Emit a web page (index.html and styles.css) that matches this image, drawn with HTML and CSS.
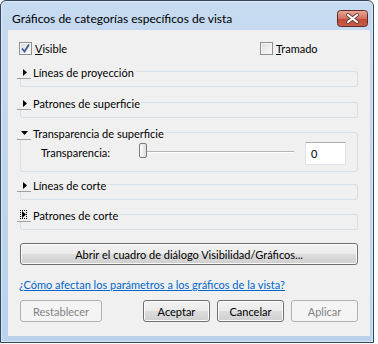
FILE: index.html
```html
<!DOCTYPE html>
<html lang="es">
  <head>
    <meta charset="UTF-8" />
    <title>Gráficos de categorías específicos de vista</title>
    <link rel="stylesheet" href="styles.css">
  </head>
  <body>
    <div class="window">
      <div class="titlebar">
        <span class="title">Gráficos de categorías específicos de vista</span>
        <svg class="close" width="31" height="17" viewBox="0 0 31 17">
          <defs>
            <linearGradient id="red" x1="0" y1="0" x2="0" y2="1">
              <stop offset="0" stop-color="#e9a99b" />
              <stop offset="0.5" stop-color="#d0705f" />
              <stop offset="0.55" stop-color="#c04a37" />
              <stop offset="1" stop-color="#c9604c" />
            </linearGradient>
          </defs>
          <rect x="0.5" y="0.5" width="30" height="16" rx="3" fill="url(#red)" stroke="#5e2a26" />
          <path d="M11 5L20 12M20 5L11 12" stroke="#6b3b36" stroke-width="4" stroke-linecap="round" />
          <path d="M11 5L20 12M20 5L11 12" stroke="#fff" stroke-width="2.2" stroke-linecap="round" />
        </svg>
      </div>

      <div class="client">
        <div class="check-row">
          <label class="check check-first">
            <span class="box">
              <svg width="9" height="9" viewBox="0 0 9 9">
                <path d="M1 4.5L3.5 7.5L8 0.5" fill="none" stroke="#3a5a99" stroke-width="1.8" />
              </svg>
            </span>
            <span><u>V</u>isible</span>
          </label>
          <label class="check">
            <span class="box"></span>
            <span><u>T</u>ramado</span>
          </label>
        </div>

        <div class="group g1">
          <div class="group-head">
            <span class="exp"><svg width="4" height="7"><path d="M0 0L4 3.5L0 7z" /></svg></span>
            <span class="group-title">Líneas de proyección</span>
            <span class="group-rule"></span>
          </div>
          <div class="group-body"></div>
        </div>

        <div class="group g2">
          <div class="group-head">
            <span class="exp"><svg width="4" height="7"><path d="M0 0L4 3.5L0 7z" /></svg></span>
            <span class="group-title">Patrones de superficie</span>
            <span class="group-rule"></span>
          </div>
          <div class="group-body"></div>
        </div>

        <div class="group g3">
          <div class="group-head">
            <span class="exp exp-open"><svg width="7" height="4"><path d="M0 0L7 0L3.5 4z" /></svg></span>
            <span class="group-title">Transparencia de superficie</span>
            <span class="group-rule"></span>
          </div>
          <div class="group-body body-open">
            <span class="field-label">Transparencia:</span>
            <div class="slider">
              <span class="track"></span>
              <span class="thumb"></span>
            </div>
            <div class="textbox">0</div>
          </div>
        </div>

        <div class="group g4">
          <div class="group-head">
            <span class="exp"><svg width="4" height="7"><path d="M0 0L4 3.5L0 7z" /></svg></span>
            <span class="group-title">Líneas de corte</span>
            <span class="group-rule"></span>
          </div>
          <div class="group-body"></div>
        </div>

        <div class="group g5">
          <div class="group-head">
            <span class="exp exp-focus"><span class="focus"><svg width="4" height="7"><path d="M0 0L4 3.5L0 7z" /></svg></span></span>
            <span class="group-title">Patrones de corte</span>
            <span class="group-rule"></span>
          </div>
          <div class="group-body"></div>
        </div>

        <button class="btn btn-wide">Abrir el cuadro de diálogo Visibilidad/Gráficos...</button>

        <a class="help-link" href="#">¿Cómo afectan los parámetros a los gráficos de la vista?</a>

        <div class="button-row">
          <button class="btn btn-reset" disabled>Restablecer</button>
          <span class="spacer"></span>
          <button class="btn">Aceptar</button>
          <button class="btn">Cancelar</button>
          <button class="btn" disabled>Aplicar</button>
        </div>
      </div>
    </div>
  </body>
</html>
```

FILE: styles.css
```css
body {
  margin: 0;
  background-color: #fff;
  font-family: Lato, "Noto Sans", sans-serif;
  font-size: 11px;
  color: #000;
}
.window {
  width: 374px;
  height: 343px;
  box-sizing: border-box;
  border: 1px solid #34465c;
  border-radius: 6px 6px 0 0;
  padding: 0 3px 6px 7px;
  background: linear-gradient(#c6daf0, #bad2ec);
  box-shadow: inset 0 0 0 1px rgba(255, 255, 255, 0.45);
  display: flex;
  flex-direction: column;
}
.titlebar {
  height: 29px;
  box-sizing: border-box;
  padding: 6px 2px 0 4px;
  display: flex;
  align-items: center;
}
.title {
  flex: 1;
  font-size: 12px;
  color: #000;
}
.close {
  display: block;
}
.client {
  flex: 1;
  background-color: #f0f0f0;
  display: flex;
  flex-direction: column;
}

/* checkboxes */
.check-row {
  display: flex;
  margin: 12px 0 0 11px;
  height: 13px;
}
.check {
  display: flex;
  align-items: center;
  line-height: 13px;
}
.check-first {
  width: 241px;
}
.box {
  width: 13px;
  height: 13px;
  box-sizing: border-box;
  border: 1px solid #8e8f8f;
  background: linear-gradient(135deg, #dcdcdc, #fbfbfb);
  box-shadow: inset 0 0 0 1px #f4f4f4;
  margin-right: 3px;
  display: flex;
  align-items: center;
  justify-content: center;
}
.check u {
  text-decoration-thickness: 1px;
}

/* collapsible groups */
.group {
  margin-left: 9px;
  width: 341px;
}
.g1 {
  margin-top: 11px;
}
.g2 {
  margin-top: 10px;
}
.g3 {
  margin-top: 9px;
}
.g4 {
  margin-top: 7px;
}
.g5 {
  margin-top: 9px;
}
.group-head {
  display: flex;
  height: 13px;
}
.exp {
  width: 14px;
  height: 13px;
  box-sizing: border-box;
  border-bottom: 1px solid #a0a0a0;
  padding: 3px 0 0 6px;
  display: flex;
  align-items: flex-start;
}
.exp-open {
  padding: 4px 0 0 4px;
}
.exp-focus {
  padding: 1px 0 0 3px;
}
.focus {
  display: flex;
  width: 7px;
  height: 9px;
  box-sizing: border-box;
  padding: 1px 0 0 2px;
  outline: 1px dotted #000;
  outline-offset: -1px;
}
.exp svg {
  display: block;
}
.group-title {
  padding: 0 2px 0 2px;
  line-height: 13px;
  white-space: nowrap;
}
.group-rule {
  flex: 1;
  margin-top: 5px;
  border-top: 1px solid #d5dfe5;
  border-right: 1px solid #d5dfe5;
  border-top-right-radius: 3px;
}
.group-body {
  margin-left: 3px;
  height: 7px;
  border: 1px solid #d5dfe5;
  border-top: none;
  border-radius: 0 0 3px 3px;
}
.body-open {
  display: flex;
  align-items: flex-start;
  padding: 2px 0 0 20px;
  box-sizing: border-box;
  height: 32px;
}
.field-label {
  width: 98px;
  line-height: 15px;
  margin-top: 3px;
}
.slider {
  position: relative;
  width: 155px;
  height: 23px;
}
.track {
  position: absolute;
  left: 6px;
  right: 0;
  top: 9px;
  height: 1px;
  background-color: #b5b5b5;
  border-bottom: 1px solid #fff;
}
.thumb {
  position: absolute;
  left: 0;
  top: 1px;
  width: 8px;
  height: 15px;
  box-sizing: border-box;
  border: 1px solid #7b7b7b;
  border-radius: 2px;
  background: linear-gradient(90deg, #fdfdfd, #dcdcdc);
}
.textbox {
  margin-left: 11px;
  width: 41px;
  height: 23px;
  box-sizing: border-box;
  border: 1px solid #e2e3ea;
  border-top-color: #abadb3;
  background-color: #fff;
  padding: 3px 0 0 5px;
  line-height: 15px;
}

/* buttons */
.btn {
  font-family: Lato, "Noto Sans", sans-serif;
  font-size: 11px;
  color: #000;
  height: 22px;
  padding: 0;
  border: 1px solid #707070;
  border-radius: 3px;
  background: linear-gradient(#f2f2f2 0%, #ebebeb 50%, #dddddd 50%, #cfcfcf 100%);
  box-shadow: inset 0 0 0 1px #fbfbfb;
}
.btn:disabled {
  color: #838383;
  border-color: #adb2b5;
  background: #f4f4f4;
  box-shadow: none;
}
.btn-wide {
  margin: 13px 0 0 12px;
  width: 338px;
}
.help-link {
  margin: 12px 0 0 11px;
  line-height: 15px;
  color: #0066cc;
  align-self: flex-start;
}
.button-row {
  display: flex;
  gap: 7px;
  margin: 8px 0 0 12px;
  width: 338px;
}
.button-row .btn {
  width: 67px;
}
.button-row .btn-reset {
  width: 82px;
}
.spacer {
  flex: 1;
}
```
